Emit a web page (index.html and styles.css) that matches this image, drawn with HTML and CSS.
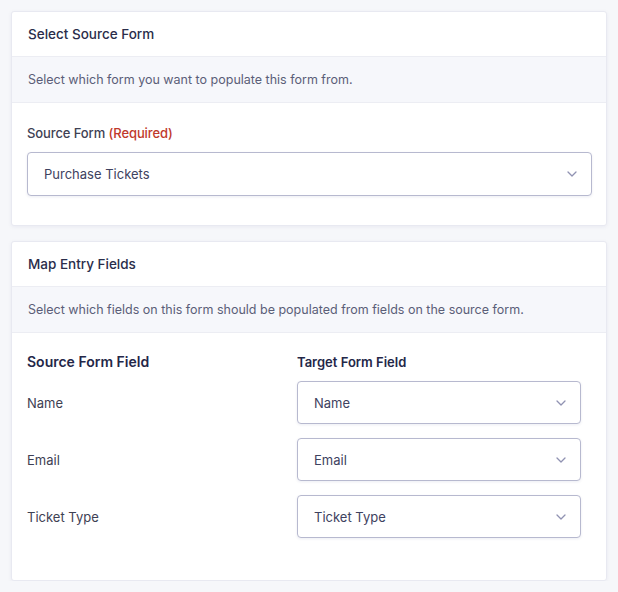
FILE: index.html
```html
<!DOCTYPE html>
<html lang="en">
<head>
<meta charset="utf-8">
<title>Populate Anything</title>
<link rel="stylesheet" href="styles.css">
</head>
<body>
<main class="page">
  <section class="panel">
    <header class="panel-title">Select Source Form</header>
    <div class="panel-desc">Select which form you want to populate this form from.</div>
    <div class="panel-body panel-body--source">
      <label class="field-label">Source Form <span class="required">(Required)</span></label>
      <div class="select select--wide">
        <span class="select-value">Purchase Tickets</span>
        <svg class="chevron" width="10" height="6" viewBox="0 0 10 6"><path d="M1 1l4 4 4-4" fill="none" stroke="#9092b2" stroke-width="1.3" stroke-linecap="round" stroke-linejoin="round"/></svg>
      </div>
    </div>
  </section>

  <section class="panel">
    <header class="panel-title">Map Entry Fields</header>
    <div class="panel-desc">Select which fields on this form should be populated from fields on the source form.</div>
    <div class="panel-body panel-body--map">
      <div class="map-grid">
        <div class="col-head col-head--source">Source Form Field</div>
        <div class="col-head">Target Form Field</div>

        <div class="map-label">Name</div>
        <div class="select">
          <span class="select-value">Name</span>
          <svg class="chevron" width="10" height="6" viewBox="0 0 10 6"><path d="M1 1l4 4 4-4" fill="none" stroke="#9092b2" stroke-width="1.3" stroke-linecap="round" stroke-linejoin="round"/></svg>
        </div>

        <div class="map-label">Email</div>
        <div class="select">
          <span class="select-value">Email</span>
          <svg class="chevron" width="10" height="6" viewBox="0 0 10 6"><path d="M1 1l4 4 4-4" fill="none" stroke="#9092b2" stroke-width="1.3" stroke-linecap="round" stroke-linejoin="round"/></svg>
        </div>

        <div class="map-label">Ticket Type</div>
        <div class="select">
          <span class="select-value">Ticket Type</span>
          <svg class="chevron" width="10" height="6" viewBox="0 0 10 6"><path d="M1 1l4 4 4-4" fill="none" stroke="#9092b2" stroke-width="1.3" stroke-linecap="round" stroke-linejoin="round"/></svg>
        </div>
      </div>
    </div>
  </section>
</main>
</body>
</html>
```

FILE: styles.css
```css
* { box-sizing: border-box; }

html, body {
  margin: 0;
  background: #f6f7fa;
}

body {
  font-family: Inter, "Noto Sans", sans-serif;
  color: #242748;
  -webkit-font-smoothing: antialiased;
}

.page {
  padding: 11px 11px 0 11px;
  display: flex;
  flex-direction: column;
  gap: 15px;
}

.panel {
  background: #fff;
  border: 1px solid #e8e9f1;
  border-radius: 3px;
  box-shadow: 0 1px 4px rgba(18, 25, 97, 0.06);
}

.panel-title {
  height: 45px;
  display: flex;
  align-items: center;
  padding: 0 16px;
  font-size: 13.5px;
  font-weight: 500;
  color: #2a2d4a;
  border-bottom: 1px solid #ecedf3;
}

.panel-desc {
  height: 46px;
  display: flex;
  align-items: center;
  padding: 0 16px;
  font-size: 12.5px;
  color: #5b5e78;
  background: #f6f7fb;
  border-bottom: 1px solid #ecedf3;
}

.panel-body--source {
  padding: 21px 14px 29px 15px;
  display: flex;
  flex-direction: column;
  gap: 10px;
}

.field-label {
  font-size: 13px;
  font-weight: 500;
  color: #3e4153;
  line-height: 18px;
  letter-spacing: -0.1px;
}

.required {
  color: #c0392b;
}

.select {
  height: 43px;
  border: 1px solid #b7b9cf;
  border-radius: 4px;
  background: #fff;
  box-shadow: 0 1px 3px rgba(18, 25, 97, 0.08);
  display: flex;
  align-items: center;
  justify-content: space-between;
  padding: 0 14px 0 16px;
  font-size: 13px;
  color: #3e4260;
}

.select--wide {
  height: 44px;
}

.chevron {
  display: block;
}

.panel-body--map {
  padding: 19px 25px 42px 15px;
}

.map-grid {
  display: grid;
  grid-template-columns: 270px 1fr;
  row-gap: 14px;
  align-items: center;
}

.col-head {
  font-size: 13px;
  font-weight: 600;
  color: #242748;
  line-height: 20px;
  margin-bottom: -5px;
}

.col-head--source {
  font-size: 14px;
}

.map-label {
  font-size: 13px;
  color: #3e4153;
}
```
